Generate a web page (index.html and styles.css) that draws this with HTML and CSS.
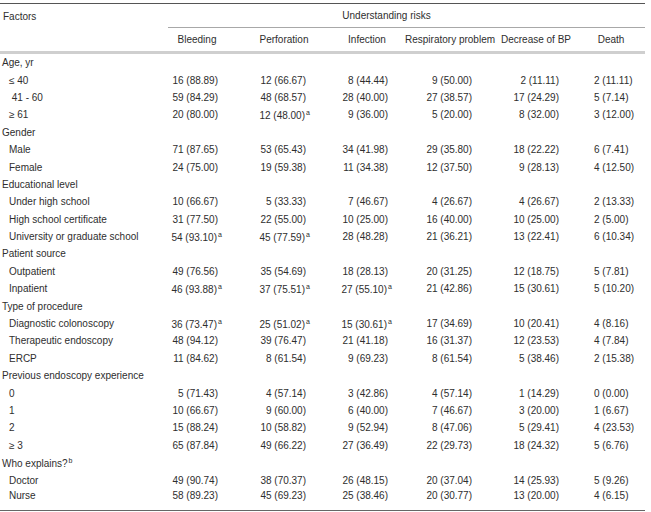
FILE: index.html
```html
<!DOCTYPE html>
<html>
<head>
<meta charset="utf-8">
<link rel="stylesheet" href="styles.css">
</head>
<body>
<table class="tbl">
  <colgroup>
    <col class="c0"><col class="c1"><col class="c2"><col class="c3"><col class="c4"><col class="c5"><col class="c6">
  </colgroup>
  <thead>
    <tr class="h1">
      <th class="factors">Factors</th>
      <th colspan="6" class="group"><div class="group-label">Understanding risks</div></th>
    </tr>
    <tr class="h2">
      <th></th>
      <th>Bleeding</th>
      <th>Perforation</th>
      <th>Infection</th>
      <th>Respiratory problem</th>
      <th>Decrease of BP</th>
      <th>Death</th>
    </tr>
  </thead>
  <tbody>
    <tr class="cat"><td>Age, yr</td><td></td><td></td><td></td><td></td><td></td><td></td></tr>
    <tr><td class="sub">≤ 40</td><td>16 (88.89)</td><td>12 (66.67)</td><td>8 (44.44)</td><td>9 (50.00)</td><td>2 (11.11)</td><td>2 (11.11)</td></tr>
    <tr><td class="sub">&nbsp;41 - 60</td><td>59 (84.29)</td><td>48 (68.57)</td><td>28 (40.00)</td><td>27 (38.57)</td><td>17 (24.29)</td><td>5 (7.14)</td></tr>
    <tr><td class="sub">≥ 61</td><td>20 (80.00)</td><td>12 (48.00)<sup>a</sup></td><td>9 (36.00)</td><td>5 (20.00)</td><td>8 (32.00)</td><td>3 (12.00)</td></tr>
    <tr class="cat"><td>Gender</td><td></td><td></td><td></td><td></td><td></td><td></td></tr>
    <tr><td class="sub">Male</td><td>71 (87.65)</td><td>53 (65.43)</td><td>34 (41.98)</td><td>29 (35.80)</td><td>18 (22.22)</td><td>6 (7.41)</td></tr>
    <tr><td class="sub">Female</td><td>24 (75.00)</td><td>19 (59.38)</td><td>11 (34.38)</td><td>12 (37.50)</td><td>9 (28.13)</td><td>4 (12.50)</td></tr>
    <tr class="cat"><td>Educational level</td><td></td><td></td><td></td><td></td><td></td><td></td></tr>
    <tr><td class="sub">Under high school</td><td>10 (66.67)</td><td>5 (33.33)</td><td>7 (46.67)</td><td>4 (26.67)</td><td>4 (26.67)</td><td>2 (13.33)</td></tr>
    <tr><td class="sub">High school certificate</td><td>31 (77.50)</td><td>22 (55.00)</td><td>10 (25.00)</td><td>16 (40.00)</td><td>10 (25.00)</td><td>2 (5.00)</td></tr>
    <tr><td class="sub">University or graduate school</td><td>54 (93.10)<sup>a</sup></td><td>45 (77.59)<sup>a</sup></td><td>28 (48.28)</td><td>21 (36.21)</td><td>13 (22.41)</td><td>6 (10.34)</td></tr>
    <tr class="cat"><td>Patient source</td><td></td><td></td><td></td><td></td><td></td><td></td></tr>
    <tr><td class="sub">Outpatient</td><td>49 (76.56)</td><td>35 (54.69)</td><td>18 (28.13)</td><td>20 (31.25)</td><td>12 (18.75)</td><td>5 (7.81)</td></tr>
    <tr><td class="sub">Inpatient</td><td>46 (93.88)<sup>a</sup></td><td>37 (75.51)<sup>a</sup></td><td>27 (55.10)<sup>a</sup></td><td>21 (42.86)</td><td>15 (30.61)</td><td>5 (10.20)</td></tr>
    <tr class="cat"><td>Type of procedure</td><td></td><td></td><td></td><td></td><td></td><td></td></tr>
    <tr><td class="sub">Diagnostic colonoscopy</td><td>36 (73.47)<sup>a</sup></td><td>25 (51.02)<sup>a</sup></td><td>15 (30.61)<sup>a</sup></td><td>17 (34.69)</td><td>10 (20.41)</td><td>4 (8.16)</td></tr>
    <tr><td class="sub">Therapeutic endoscopy</td><td>48 (94.12)</td><td>39 (76.47)</td><td>21 (41.18)</td><td>16 (31.37)</td><td>12 (23.53)</td><td>4 (7.84)</td></tr>
    <tr><td class="sub">ERCP</td><td>11 (84.62)</td><td>8 (61.54)</td><td>9 (69.23)</td><td>8 (61.54)</td><td>5 (38.46)</td><td>2 (15.38)</td></tr>
    <tr class="cat"><td>Previous endoscopy experience</td><td></td><td></td><td></td><td></td><td></td><td></td></tr>
    <tr><td class="sub">0</td><td>5 (71.43)</td><td>4 (57.14)</td><td>3 (42.86)</td><td>4 (57.14)</td><td>1 (14.29)</td><td>0 (0.00)</td></tr>
    <tr><td class="sub">1</td><td>10 (66.67)</td><td>9 (60.00)</td><td>6 (40.00)</td><td>7 (46.67)</td><td>3 (20.00)</td><td>1 (6.67)</td></tr>
    <tr><td class="sub">2</td><td>15 (88.24)</td><td>10 (58.82)</td><td>9 (52.94)</td><td>8 (47.06)</td><td>5 (29.41)</td><td>4 (23.53)</td></tr>
    <tr><td class="sub">≥ 3</td><td>65 (87.84)</td><td>49 (66.22)</td><td>27 (36.49)</td><td>22 (29.73)</td><td>18 (24.32)</td><td>5 (6.76)</td></tr>
    <tr class="cat"><td>Who explains?<sup class="inl">b</sup></td><td></td><td></td><td></td><td></td><td></td><td></td></tr>
    <tr><td class="sub">Doctor</td><td>49 (90.74)</td><td>38 (70.37)</td><td>26 (48.15)</td><td>20 (37.04)</td><td>14 (25.93)</td><td>5 (9.26)</td></tr>
    <tr class="last"><td class="sub">Nurse</td><td>58 (89.23)</td><td>45 (69.23)</td><td>25 (38.46)</td><td>20 (30.77)</td><td>13 (20.00)</td><td>4 (6.15)</td></tr>
  </tbody>
</table>
</body>
</html>
```
FILE: styles.css
```css
html, body {
  margin: 0;
  padding: 0;
  background: #ffffff;
}
body {
  padding-top: 3px;
  font-family: "Liberation Sans", Arial, sans-serif;
  font-size: 10px;
  color: #2e2e2e;
}
.tbl {
  width: 645px;
  border-collapse: collapse;
  table-layout: fixed;
  border-top: 1.5px solid #555;
  border-bottom: 1.5px solid #666;
}
.c0 { width: 155px; }
.c1 { width: 84px; }
.c2 { width: 90px; }
.c3 { width: 76px; }
.c4 { width: 90px; }
.c5 { width: 82px; }
.c6 { width: 68px; }

th {
  font-weight: normal;
  padding: 0;
  white-space: nowrap;
}
.h1 th { height: 24px; vertical-align: middle; }
.h1 .factors { text-align: left; padding-left: 3px; }
.h1 .group { padding: 0; }
.group-label {
  margin-left: 13px;
  height: 23px;
  line-height: 23px;
  border-bottom: 1px solid #a8a8a8;
  text-align: center;
  padding-right: 40px;
}
.h2 th {
  height: 23px;
  text-align: center;
  border-bottom: 3px solid #cfcfcf;
}
td {
  padding: 0;
  height: 17.4px;
  white-space: nowrap;
  text-align: right;
  vertical-align: middle;
}
td:nth-child(1) { text-align: left; padding-left: 2px; }
td.sub { padding-left: 9px; }
td:nth-child(2) { padding-right: 21px; }
td:nth-child(3) { padding-right: 23px; }
td:nth-child(4) { padding-right: 17px; }
td:nth-child(5) { padding-right: 23px; }
td:nth-child(6) { padding-right: 18px; }
td:nth-child(7) { text-align: left; padding-left: 17px; }
tr.last td { height: 20px; vertical-align: top; padding-top: 1px; }
sup {
  display: inline-block;
  width: 0;
  font-size: 7px;
  line-height: 1;
  vertical-align: 4px;
  padding-left: 1px;
}
sup.inl { width: auto; padding-left: 1px; }
```
